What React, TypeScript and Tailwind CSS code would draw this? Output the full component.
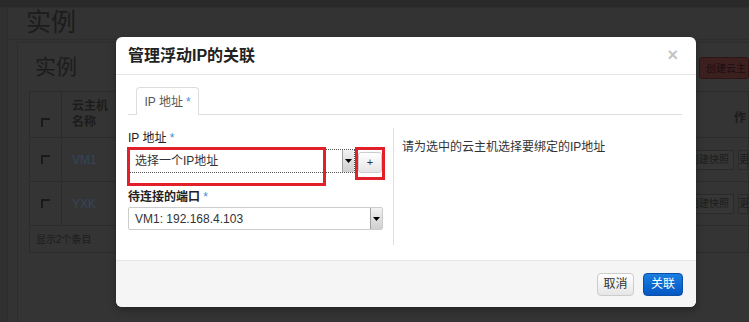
import React from "react";

const F = { fontFamily: '"Liberation Sans", "Noto Sans CJK SC", sans-serif' };

function Check() {
  return (
    <div className="w-[9px] h-[9px] border-l-2 border-t-2 border-[#1a1a1a]" />
  );
}

function WinArrow() {
  return (
    <div className="w-[12px] h-full bg-gradient-to-b from-[#f2f2f2] to-[#cfcfcf] border-l border-[#a0a0a0] flex items-center justify-center">
      <svg width="7" height="4" viewBox="0 0 7 4">
        <path d="M0 0 L7 0 L3.5 4 Z" fill="#000" />
      </svg>
    </div>
  );
}

export default function App() {
  return (
    <div
      className="relative w-[749px] h-[322px] overflow-hidden bg-[#333333] text-[12px]"
      style={F}
    >
      {/* background page */}
      <div className="h-[8px] bg-[#2a2a2a] border-b border-[#2e2e2e]" />
      <div className="flex h-[314px]">
        <div className="w-[8px] bg-[#303030] border-r border-[#2d2d2d]" />
        <div className="flex-1 flex flex-col">
          <div className="h-[32px] pl-[18px] border-b border-[#2d2d2d] flex items-end pb-[3px]">
            <span className="text-[25px] leading-[28px] text-[#1c1c1c]">实例</span>
          </div>
          <div className="ml-[9px] mt-[2px] flex-1 border-l border-t border-[#2d2d2d] bg-[#343434] flex flex-col">
            <div className="h-[48px] pl-[17px] flex items-center justify-between">
              <span className="text-[21px] text-[#1c1c1c]">实例</span>
              <div className="w-[50px] h-[22px] bg-[#3c2020] border border-[#2e1616] rounded-[3px] text-[10px] text-[#1c0c0c] flex items-center pl-[6px] mt-[2px]">
                创建云主
              </div>
            </div>
            <div className="ml-[11px] flex flex-col border border-[#2c2c2c] text-[#1c1c1c]">
              <div className="flex h-[46px] border-b border-[#2c2c2c]">
                <div className="w-[32px] flex items-end justify-center pb-[10px] border-r border-[#2c2c2c]">
                  <Check />
                </div>
                <div className="w-[60px] pl-[10px] pt-[6px] leading-[16px] font-bold text-[12px]">
                  云主机
                  <br />
                  名称
                </div>
                <div className="flex-1 flex items-end justify-end pb-[10px] pr-[2px] font-bold">
                  作
                </div>
              </div>
              {["VM1", "YXK"].map((n) => (
                <div key={n} className="flex h-[44px] border-b border-[#2c2c2c]">
                  <div className="w-[32px] flex items-center justify-center border-r border-[#2c2c2c]">
                    <Check />
                  </div>
                  <div className="w-[60px] pl-[10px] flex items-center text-[#32465c]">{n}</div>
                  <div className="flex-1 flex items-center justify-end gap-[4px]">
                    <div className="h-[20px] px-[4px] border border-[#2a2a2a] bg-[#363636] text-[10px] flex items-center">
                      创建快照
                    </div>
                    <div className="h-[20px] w-[10px] border border-[#2a2a2a] bg-[#363636] text-[10px] flex items-center">
                      更
                    </div>
                  </div>
                </div>
              ))}
              <div className="h-[26px] pl-[6px] flex items-center text-[10px]">显示2个条目</div>
            </div>
          </div>
        </div>
      </div>

      {/* modal */}
      <div className="absolute left-[116px] top-[37px] w-[580px] h-[270px] bg-white rounded-[6px] flex flex-col overflow-hidden shadow-[0_3px_7px_rgba(0,0,0,0.3)]">
        <div className="h-[38px] shrink-0 px-[12px] flex items-center justify-between border-b border-[#e5e5e5]">
          <span className="text-[16px] font-bold text-[#222]">管理浮动IP的关联</span>
          <span className="text-[18px] font-bold text-[#c4c4c4] leading-none mr-[6px] mt-[-2px]">×</span>
        </div>
        <div className="flex-1 pl-[12px] pr-[14px] pt-[12px]">
          <div className="h-[28px] border-b border-[#ddd] flex items-end pl-[8px]">
            <div className="h-[28px] w-[63px] border border-[#ddd] border-b-0 rounded-t-[4px] bg-white -mb-px flex items-center justify-center text-[12px] text-[#555]">
              IP 地址 <span className="text-[#4a8ad0] ml-[3px]">*</span>
            </div>
          </div>
          <div className="flex mt-[13px] h-[117px]">
            <div className="relative w-[255px] pt-[2px]">
              <div className="h-[16px] leading-[16px] text-[12px] text-[#222]">
                IP 地址 <span className="text-[#4a8ad0]">*</span>
              </div>
              <div className="mt-[3px] flex items-start">
                <div className="w-[227px] h-[24px] border border-dotted border-[#555] flex items-stretch">
                  <div className="flex-1 flex items-center pl-[6px] text-[12px] text-[#333]">选择一个IP地址</div>
                  <WinArrow />
                </div>
                <div className="ml-[3px] mt-[3px] w-[24px] h-[21px] border border-[#ccc] rounded-[3px] bg-gradient-to-b from-white to-[#e6e6e6] flex items-center justify-center text-[11px] text-[#333]">
                  +
                </div>
              </div>
              <div className="mt-[16px] h-[16px] leading-[16px] text-[12px] font-bold text-[#222]">
                待连接的端口 <span className="text-[#4a8ad0] font-normal">*</span>
              </div>
              <div className="mt-[2px] w-[255px] h-[23px] border border-[#ccc] rounded-[2px] flex items-stretch">
                <div className="flex-1 flex items-center pl-[6px] text-[12px] text-[#333]">VM1: 192.168.4.103</div>
                <WinArrow />
              </div>
              {/* red highlight boxes */}
              <div className="absolute left-[-1px] top-[19px] w-[199px] h-[39px] border-[3px] border-[#e2202a]" />
              <div className="absolute left-[227px] top-[19px] w-[30px] h-[33px] border-[3px] border-[#e2202a]" />
            </div>
            <div className="ml-[10px] border-l border-[#e0e0e0] pl-[8px] pt-[10px] text-[12px] text-[#333] h-[117px]">
              请为选中的云主机选择要绑定的IP地址
            </div>
          </div>
        </div>
        <div className="h-[47px] shrink-0 bg-[#f5f5f5] border-t border-[#e5e5e5] flex items-center justify-end pr-[13px] gap-[9px]">
          <div className="w-[37px] h-[23px] border border-[#ccc] rounded-[4px] bg-gradient-to-b from-white to-[#e6e6e6] flex items-center justify-center text-[12px] text-[#333]">
            取消
          </div>
          <div className="w-[40px] h-[23px] border border-[#0a4fa8] rounded-[4px] bg-gradient-to-b from-[#1a7ee0] to-[#0557c4] flex items-center justify-center text-[12px] text-white">
            关联
          </div>
        </div>
      </div>
    </div>
  );
}
